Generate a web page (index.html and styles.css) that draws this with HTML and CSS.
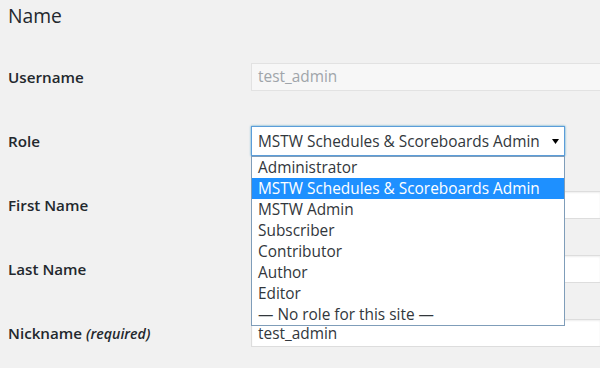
FILE: index.html
```html
<!DOCTYPE html>
<html>
<head>
<meta charset="utf-8">
<link rel="stylesheet" href="styles.css">
</head>
<body>
<div class="wrap">
  <h2 class="title">Name</h2>
  <div class="form">
    <div class="row">
      <div class="label">Username</div>
      <div class="field"><div class="input disabled">test_admin</div></div>
    </div>
    <div class="row">
      <div class="label">Role</div>
      <div class="field">
        <div class="select-wrap">
          <div class="select">
            <span>MSTW Schedules &amp; Scoreboards Admin</span>
            <svg class="arrow" width="7" height="5" viewBox="0 0 7 5"><path d="M0 0H7L3.5 5Z" fill="#000"/></svg>
          </div>
          <ul class="dropdown">
            <li>Administrator</li>
            <li class="selected">MSTW Schedules &amp; Scoreboards Admin</li>
            <li>MSTW Admin</li>
            <li>Subscriber</li>
            <li>Contributor</li>
            <li>Author</li>
            <li>Editor</li>
            <li>— No role for this site —</li>
          </ul>
        </div>
      </div>
    </div>
    <div class="row">
      <div class="label">First Name</div>
      <div class="field"><div class="input"></div></div>
    </div>
    <div class="row">
      <div class="label">Last Name</div>
      <div class="field"><div class="input"></div></div>
    </div>
    <div class="row">
      <div class="label">Nickname <em class="req">(required)</em></div>
      <div class="field"><div class="input low">test_admin</div></div>
    </div>
  </div>
</div>
</body>
</html>
```

FILE: styles.css
```css
* { box-sizing: border-box; }
html, body {
  margin: 0;
  padding: 0;
  background: #f1f1f1;
  font-family: "Open Sans", "Noto Sans", sans-serif;
  color: #23282d;
  overflow: hidden;
  width: 600px;
  height: 368px;
}
.wrap {
  padding-left: 8px;
}
.title {
  margin: 0;
  height: 45px;
  padding-top: 2px;
  font-size: 19.3px;
  font-weight: 400;
  line-height: 28px;
  color: #23282d;
}
.row {
  display: flex;
  align-items: center;
  height: 64px;
}
.label {
  width: 243px;
  flex: none;
  font-size: 15.2px;
  font-weight: 600;
  line-height: 20px;
  color: #23282d;
}
.req {
  font-weight: 600;
  font-size: 14.2px;
}
.field {
  flex: none;
  position: relative;
}
.input {
  width: 350px;
  height: 28px;
  border: 1px solid #ddd;
  background: #fff;
  box-shadow: inset 0 1px 2px rgba(0,0,0,.07);
  padding: 0 6px;
  font-size: 15.4px;
  line-height: 26px;
  color: #32373c;
}
.input.low {
  padding-top: 6px;
  line-height: 16px;
}
.input.disabled {
  background: #f7f7f7;
  color: #a0a5aa;
  box-shadow: none;
  border-color: #e2e2e2;
}
.select-wrap {
  position: relative;
  width: 314px;
}
.select {
  height: 30px;
  border: 1px solid #5b9dd9;
  box-shadow: 0 0 2px rgba(30,140,190,.8);
  background: #fff;
  display: flex;
  align-items: center;
  justify-content: space-between;
  padding: 0 5px 0 6px;
  font-size: 15.4px;
  color: #32373c;
}
.arrow { display: block; margin-top: 1px; }
.dropdown {
  position: absolute;
  top: 30px;
  left: 0;
  width: 314px;
  margin: 0;
  padding: 0;
  list-style: none;
  background: #fff;
  border: 1px solid #7f9db9;
  z-index: 5;
}
.dropdown li {
  height: 21px;
  line-height: 21px;
  padding-left: 6px;
  font-size: 15.4px;
  color: #32373c;
  white-space: nowrap;
}
.dropdown li.selected {
  background: #1e90ff;
  color: #fff;
}
```
